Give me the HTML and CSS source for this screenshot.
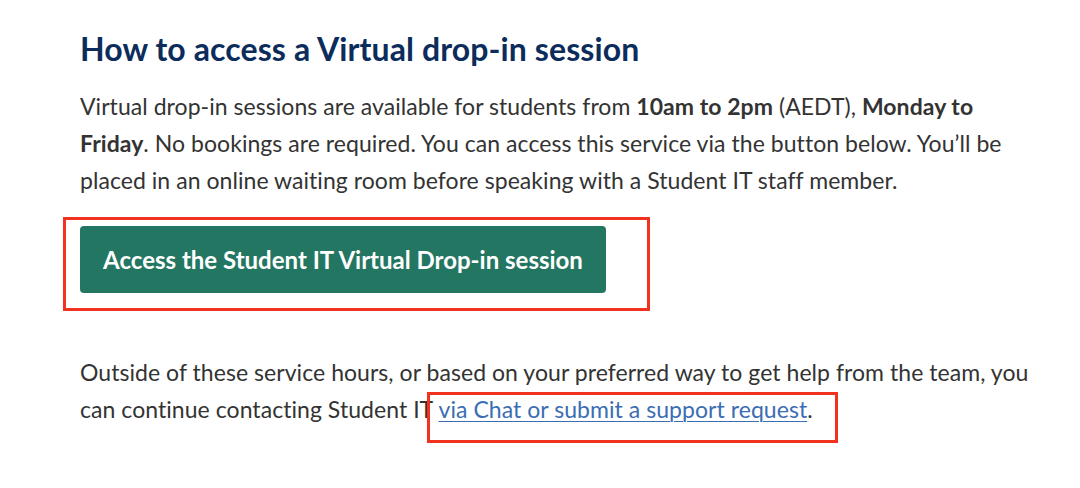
FILE: index.html
```html
<!DOCTYPE html>
<html lang="en">
<head>
  <meta charset="UTF-8" />
  <meta name="viewport" content="width=device-width, initial-scale=1" />
  <title>Virtual drop-in session</title>
  <link rel="stylesheet" href="styles.css">
</head>
<body>
  <main class="content">
    <h2 class="section-title">How to access a Virtual drop-in session</h2>
    <p>Virtual drop-in sessions are available for students from <strong>10am to 2pm</strong> (AEDT), <strong>Monday to Friday</strong>. No bookings are required. You can access this service via the button below. You&rsquo;ll be placed in an online waiting room before speaking with a Student IT staff member.</p>

    <div class="cta-wrap">
      <a class="cta-button" href="#">Access the Student IT Virtual Drop-in session</a>
      <span class="mark mark-button"></span>
    </div>

    <p class="after">Outside of these service hours, or based on your preferred way to get help from the team, you can continue contacting Student IT <span class="link-wrap"><a href="#">via Chat or submit a support request</a><span class="mark mark-link"></span></span>.</p>
  </main>
</body>
</html>
```

FILE: styles.css
```css
body {
  margin: 0;
  background: #fff;
  color: #333;
  font-family: 'Lato', 'Open Sans', sans-serif;
}

.content {
  width: 958px;
  padding: 29px 0 60px 80px;
}

.section-title {
  margin: 0 0 19px;
  font-size: 32px;
  line-height: 40px;
  font-weight: 700;
  letter-spacing: 0.1px;
  color: #0c2d5b;
}

p {
  margin: 0;
  font-size: 23px;
  line-height: 37px;
  letter-spacing: 0.05px;
}

strong {
  font-weight: 700;
}

.cta-wrap {
  position: relative;
  width: fit-content;
  margin: 27px 0 61px;
}

.cta-button {
  display: block;
  width: 526px;
  height: 67px;
  line-height: 67px;
  text-align: center;
  background-color: #237762;
  color: #fff;
  font-size: 24px;
  font-weight: 700;
  letter-spacing: 0;
  text-decoration: none;
  border-radius: 4px;
}

.after a {
  color: #3b6db3;
  text-decoration: underline;
  text-underline-offset: 3px;
  text-decoration-thickness: 1px;
}

.link-wrap {
  position: relative;
  display: inline-block;
}

/* red annotation boxes drawn over the screenshot */
.mark {
  position: absolute;
  box-sizing: border-box;
  border: 3px solid #f0321e;
  pointer-events: none;
}

.mark-button {
  left: -17px;
  top: -9px;
  width: 587px;
  height: 94px;
}

.mark-link {
  left: -12px;
  top: 1px;
  width: 411px;
  height: 51px;
}
```
